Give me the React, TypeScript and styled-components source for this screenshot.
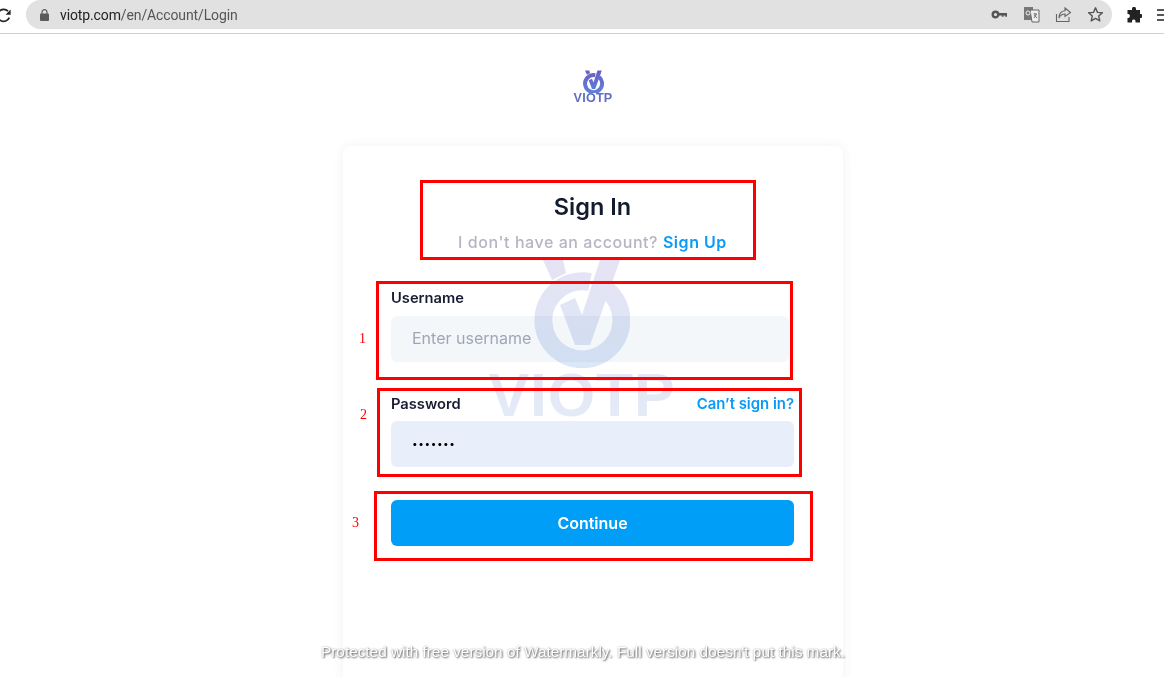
import styled, { createGlobalStyle } from "styled-components";

const Global = createGlobalStyle`
    html, body {
        margin: 0;
        height: 677px;
        overflow: hidden;
        background: #fff;
        font-family: Inter, "Liberation Sans", sans-serif;
    }
    * { box-sizing: border-box; }
`;

const Screen = styled.div`
    position: relative;
    width: 1164px;
    height: 677px;
    overflow: hidden;
    background: #fff;
`;

const BrowserBar = styled.div`
    display: flex;
    align-items: flex-start;
    height: 34px;
    border-bottom: 1px solid #cfcfcf;
    background: #fff;
`;

const Reload = styled.svg`
    flex: none;
    width: 12px;
    height: 16px;
    margin-top: 8px;
    margin-right: 14px;
`;

const Omnibox = styled.div`
    display: flex;
    flex: none;
    align-items: center;
    width: 1086px;
    height: 29px;
    padding: 0 8px 0 14px;
    border-radius: 15px;
    background: #e1e1e1;
`;

const Lock = styled.svg`
    flex: none;
    width: 9px;
    height: 12px;
    margin-right: 11px;
`;

const Url = styled.span`
    flex: 1;
    font-family: Roboto, sans-serif;
    font-size: 14px;
    letter-spacing: -0.12px;
    color: #555;
    b { font-weight: 400; color: #222; }
`;

const BarIcon = styled.svg`
    flex: none;
    width: 17px;
    height: 17px;
    margin-left: 15px;
`;

const ExtensionIcon = styled.svg`
    flex: none;
    width: 16px;
    height: 16px;
    margin: 7px 0 0 14px;
`;

const MenuIcon = styled.svg`
    flex: none;
    width: 8px;
    height: 12px;
    margin: 9px 0 0 15px;
`;

const Main = styled.main`
    display: flex;
    flex-direction: column;
    width: 500px;
    margin-left: 343px;
`;

const LogoBlock = styled.div`
    display: flex;
    flex-direction: column;
    align-items: center;
    height: 112px;
    padding-top: 36px;
`;

const LogoMark = styled.svg`
    width: 21px;
    height: 23px;
`;

const LogoName = styled.span`
    margin-top: -1px;
    font-family: "Liberation Sans", sans-serif;
    font-size: 12.6px;
    line-height: 13px;
    font-weight: 700;
    letter-spacing: 0.2px;
    color: #5f6fc4;
`;

const Card = styled.section`
    position: relative;
    height: 560px;
    padding: 0 49px 0 48px;
    border-radius: 8px;
    background: #fff;
    box-shadow: 0 0 12px rgba(60, 70, 110, 0.07);
`;

const WatermarkLayer = styled.div`
    position: absolute;
    left: 146px;
    top: 112px;
    display: flex;
    flex-direction: column;
    align-items: center;
    width: 186px;
    mix-blend-mode: multiply;
    z-index: 2;
    pointer-events: none;
`;

const WatermarkMark = styled.svg`
    width: 96px;
    height: 110px;
`;

const WatermarkName = styled.span`
    margin-top: -1px;
    font-family: "Liberation Sans", sans-serif;
    font-size: 61px;
    line-height: 56px;
    font-weight: 700;
    letter-spacing: 0.8px;
    white-space: nowrap;
    background: linear-gradient(180deg, #e6e4f4, #e3ecf8);
    -webkit-background-clip: text;
    background-clip: text;
    color: transparent;
`;

const Heading = styled.header`
    display: flex;
    flex-direction: column;
    align-items: center;
    height: 142px;
    padding-top: 46px;
`;

const Title = styled.h1`
    margin: 0;
    font-size: 23.5px;
    line-height: 30px;
    font-weight: 600;
    color: #121c2e;
`;

const Subtitle = styled.p`
    margin: 8px 0 0;
    font-size: 16px;
    line-height: 24px;
    font-weight: 500;
    letter-spacing: 0.55px;
    white-space: nowrap;
    color: #b5b5c3;
`;

const Accent = styled.a`
    font-weight: 600;
    color: #0b9af5;
`;

const Field = styled.div`
    position: relative;
    z-index: 1;
    display: flex;
    flex-direction: column;
    height: 106px;
`;

const LabelRow = styled.div<{ $gap: number }>`
    display: flex;
    justify-content: space-between;
    align-items: center;
    height: 20px;
    margin-bottom: ${(p) => p.$gap}px;
`;

const Label = styled.label`
    font-size: 14.7px;
    line-height: 20px;
    font-weight: 600;
    color: #181c32;
`;

const HelpLink = styled(Accent)`
    font-size: 14.9px;
    line-height: 20px;
`;

const Input = styled.div<{ $filled?: boolean }>`
    display: flex;
    align-items: center;
    width: ${(p) => (p.$filled ? 403 : 398)}px;
    height: 46px;
    padding: 0 0 2px 21px;
    border-radius: 6px;
    font-size: ${(p) => (p.$filled ? 10 : 16)}px;
    font-weight: 400;
    background: ${(p) => (p.$filled ? "#e8effb" : "#f4f7fa")};
    color: ${(p) => (p.$filled ? "#000" : "#a1a5b7")};
    letter-spacing: ${(p) => (p.$filled ? "0.6px" : "0")};
`;

const Continue = styled.button`
    position: relative;
    z-index: 1;
    display: block;
    width: 403px;
    height: 46px;
    padding: 0;
    border: 0;
    border-radius: 6px;
    background: #009ef7;
    font-family: inherit;
    font-size: 16px;
    font-weight: 600;
    color: #fff;
`;

// red marks drawn over the page by whoever annotated the screenshot
const Mark = styled.div<{ $x: number; $y: number; $w: number; $h: number }>`
    position: absolute;
    left: ${(p) => p.$x}px;
    top: ${(p) => p.$y}px;
    width: ${(p) => p.$w}px;
    height: ${(p) => p.$h}px;
    border: 3px solid #ff0000;
    z-index: 3;
`;

const MarkNumber = styled.span<{ $x: number; $y: number }>`
    position: absolute;
    left: ${(p) => p.$x}px;
    top: ${(p) => p.$y}px;
    font-family: "Liberation Serif", serif;
    font-size: 14px;
    line-height: 16px;
    color: #ff0000;
    z-index: 3;
`;

const Stamp = styled.div`
    position: absolute;
    left: 321px;
    top: 643px;
    font-family: "Liberation Sans", sans-serif;
    font-size: 15.35px;
    line-height: 18px;
    white-space: nowrap;
    color: #fff;
    text-shadow: 1px 1px 2px rgba(0, 0, 0, 0.6), 0 0 2px rgba(0, 0, 0, 0.3);
    z-index: 4;
`;

function BrandMark({ top, bottom, id }: { top: string; bottom: string; id: string }) {
    return (
        <>
            <defs>
                <linearGradient id={id} gradientUnits="userSpaceOnUse" x1="0" y1="0" x2="0" y2="110">
                    <stop offset="0" stopColor={top} />
                    <stop offset="1" stopColor={bottom} />
                </linearGradient>
            </defs>
            <path d="M73 32 A39 39 0 1 1 56 24" fill="none" stroke={`url(#${id})`} strokeWidth="18" />
            <path d="M9 2 L29 2 L32 15 L18 22 Z" fill={`url(#${id})`} />
            <path d="M26 47 L41 40 L48 57 L66 2 L86 2 L56 87 L41 87 Z" fill={`url(#${id})`} />
        </>
    );
}

export default function App() {
    return (
        <Screen>
            <Global />
            <BrowserBar>
                <Reload viewBox="0 0 12 16">
                    <path d="M8 3.2 A6 6 0 1 0 9.3 9.6" fill="none" stroke="#222" strokeWidth="1.7" />
                    <path d="M10.6 1.5 V6.8 H5.6 Z" fill="#222" />
                </Reload>
                <Omnibox>
                    <Lock viewBox="0 0 9 12">
                        <path d="M2 5 V3.2 a2.5 2.5 0 0 1 5 0 V5" fill="none" stroke="#5a5a5a" strokeWidth="1.2" />
                        <rect x="0" y="4.6" width="9" height="7.4" rx="1" fill="#5a5a5a" />
                    </Lock>
                    <Url>
                        <b>viotp.com</b>/en/Account/Login
                    </Url>
                    <BarIcon viewBox="0 0 17 17">
                        <circle cx="4.5" cy="8.5" r="2.8" fill="none" stroke="#555" strokeWidth="2.4" />
                        <path d="M7 7 H16 V10.8 H14.2 V9.6 H12.6 V10.8 H10.8 V9.6 H7 Z" fill="#555" />
                    </BarIcon>
                    <BarIcon viewBox="0 0 17 17">
                        <rect x="1" y="1" width="9" height="13" fill="#777" />
                        <path d="M7 4 H16 V16 H9 Z" fill="#eee" stroke="#666" strokeWidth="1" />
                        <circle cx="5" cy="7" r="2" fill="none" stroke="#eee" strokeWidth="1" />
                        <path d="M10.5 8 H14 M12 7 V8 M13.5 8 L11 12 M11.2 9 L14 12" stroke="#555" strokeWidth="0.8" fill="none" />
                    </BarIcon>
                    <BarIcon viewBox="0 0 17 17">
                        <path d="M1.5 8 V15.5 H14 V11" fill="none" stroke="#666" strokeWidth="1.1" />
                        <path d="M10 2 L15.5 6.5 L10 10.5 V8 C7 8 5 9.5 4 12 C4 8 6 5 10 4.7 Z" fill="none" stroke="#666" strokeWidth="1.1" />
                    </BarIcon>
                    <BarIcon viewBox="0 0 17 17">
                        <path d="M8.5 1.8 L10.5 6.4 L15.4 6.8 L11.7 10.1 L12.8 14.9 L8.5 12.4 L4.2 14.9 L5.3 10.1 L1.6 6.8 L6.5 6.4 Z" fill="none" stroke="#555" strokeWidth="1.4" strokeLinejoin="round" />
                    </BarIcon>
                </Omnibox>
                <ExtensionIcon viewBox="0 0 16 16">
                    <path d="M6 1.8 a2 2 0 0 1 4 0 V3 H14 V7 H15 a2.1 2.1 0 0 1 0 4 H14 V15.5 H9.5 V14 a1.8 1.8 0 0 0 -3.5 0 V15.5 H1.5 V11 H2.5 a2.1 2.1 0 0 0 0 -4 H1.5 V3 H6 Z" fill="#222" />
                </ExtensionIcon>
                <MenuIcon viewBox="0 0 8 12">
                    <path d="M0 1 H8 M0 6 H8 M0 11 H8" stroke="#222" strokeWidth="1.6" />
                </MenuIcon>
            </BrowserBar>
            <Main>
                <LogoBlock>
                    <LogoMark viewBox="0 0 96 105">
                        <BrandMark top="#6b5cc4" bottom="#5b86d8" id="logoFill" />
                    </LogoMark>
                    <LogoName>VIOTP</LogoName>
                </LogoBlock>
                <Card>
                    <WatermarkLayer>
                        <WatermarkMark viewBox="0 0 96 110">
                            <BrandMark top="#e6e3f3" bottom="#dbe7f7" id="wmFill" />
                        </WatermarkMark>
                        <WatermarkName>VIOTP</WatermarkName>
                    </WatermarkLayer>
                    <Heading>
                        <Title>Sign In</Title>
                        <Subtitle>
                            I don't have an account? <Accent>Sign Up</Accent>
                        </Subtitle>
                    </Heading>
                    <Field>
                        <LabelRow $gap={8}>
                            <Label>Username</Label>
                        </LabelRow>
                        <Input>Enter username</Input>
                    </Field>
                    <Field>
                        <LabelRow $gap={7}>
                            <Label>Password</Label>
                            <HelpLink>Can’t sign in?</HelpLink>
                        </LabelRow>
                        <Input $filled>•••••••</Input>
                    </Field>
                    <Continue>Continue</Continue>
                </Card>
            </Main>
            <Mark $x={420} $y={180} $w={336} $h={80} />
            <Mark $x={376} $y={281} $w={417} $h={99} />
            <Mark $x={377} $y={388} $w={425} $h={89} />
            <Mark $x={374} $y={491} $w={439} $h={70} />
            <MarkNumber $x={359} $y={331}>1</MarkNumber>
            <MarkNumber $x={360} $y={407}>2</MarkNumber>
            <MarkNumber $x={352} $y={515}>3</MarkNumber>
            <Stamp>Protected with free version of Watermarkly. Full version doesn't put this mark.</Stamp>
        </Screen>
    );
}
